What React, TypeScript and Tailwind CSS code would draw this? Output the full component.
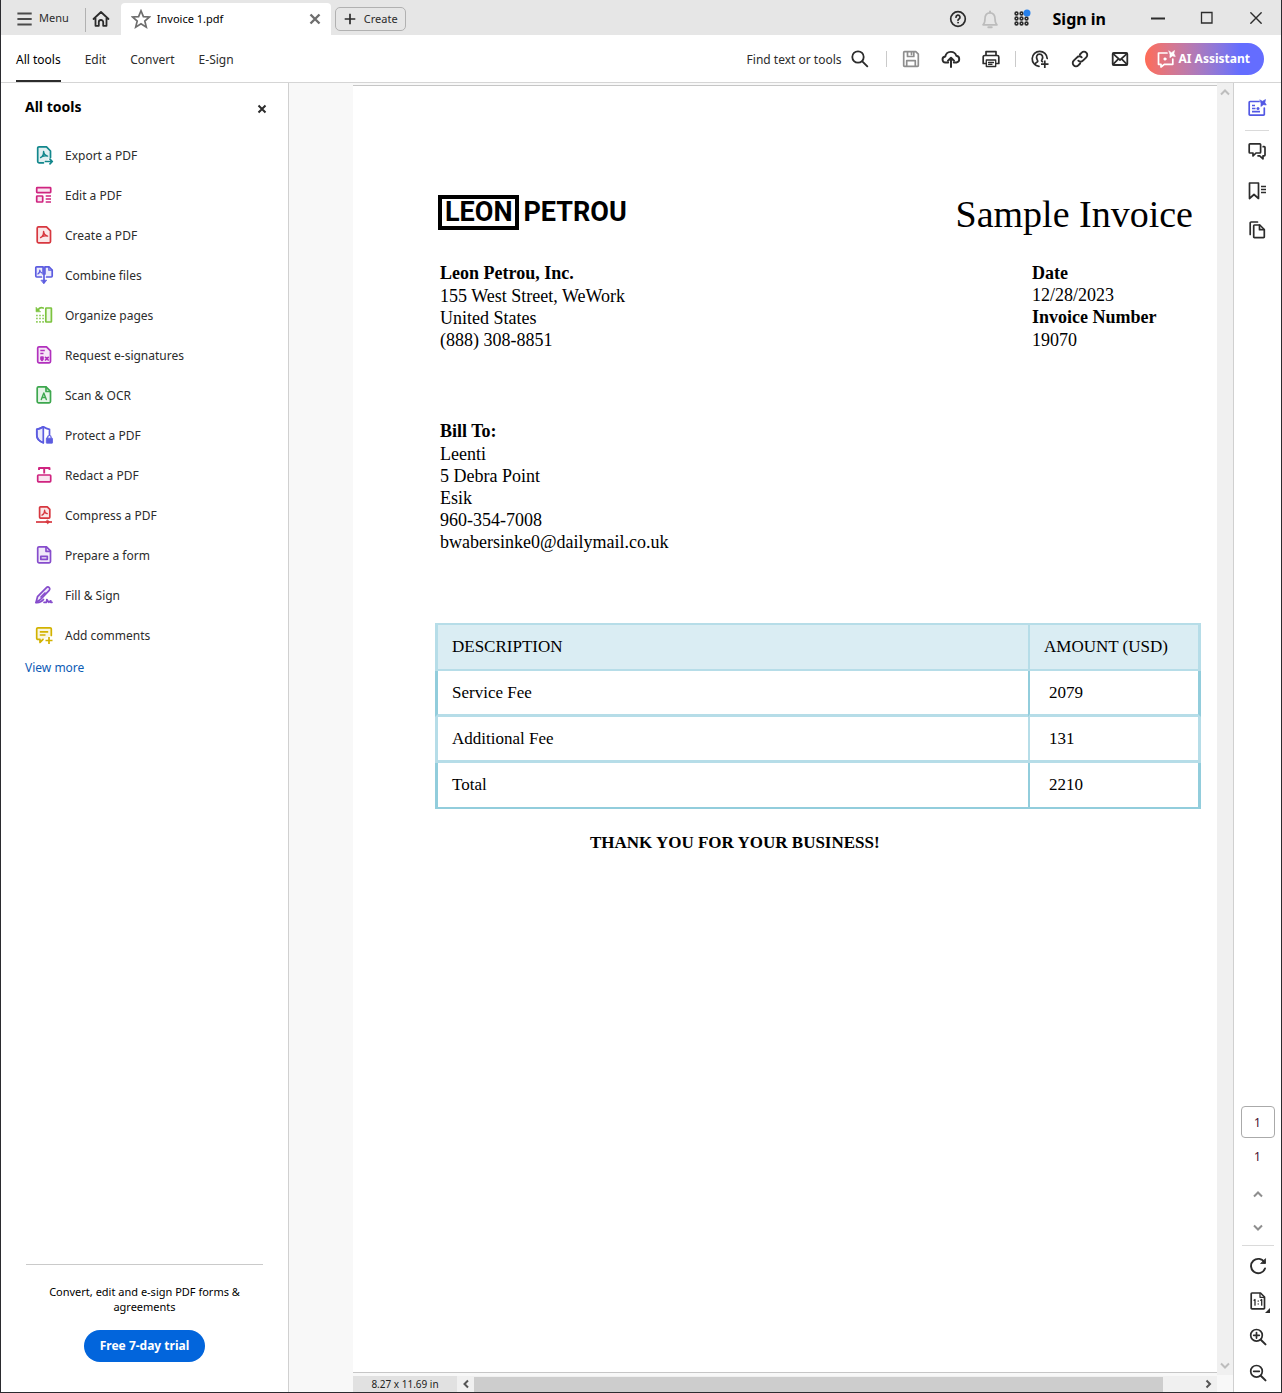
import type { ReactNode } from "react";

type IconProps = { children: ReactNode; className?: string };

function Icon({ children, className = "" }: IconProps) {
  return (
    <svg
      viewBox="0 0 20 20"
      className={`size-5 shrink-0 ${className}`}
      fill="none"
      stroke="currentColor"
      strokeWidth="1.7"
      strokeLinecap="round"
      strokeLinejoin="round"
      aria-hidden="true"
    >
      {children}
    </svg>
  );
}

const soft = { fill: "currentColor", fillOpacity: 0.12 };
const acrobat = "M6.6 12.6c1.6-.7 3-2.800 3-6.200M9.600 6.400c.2 2.500 1.500 4.200 4 4.700M6.600 12.600c1.500-1.600 4-2.100 7-1.500";

const tools: { label: string; color: string; icon: ReactNode }[] = [
  {
    label: "Export a PDF",
    color: "text-[#12878c]",
    icon: (
      <>
        <path d="M16.500 12.500V6L12.500 1.800H5A1.300 1.300 0 0 0 3.700 3.100v13.400A1.300 1.300 0 0 0 5 17.800h4.500" {...soft} />
        <path d={acrobat} strokeWidth="1.400" />
        <path d="M11.500 16.500h6.500M16 14.200l2.300 2.300-2.300 2.300" />
      </>
    ),
  },
  {
    label: "Edit a PDF",
    color: "text-[#cf2480]",
    icon: (
      <>
        <rect x="2.700" y="2.700" width="14" height="5" rx=".6" {...soft} />
        <rect x="2.700" y="11" width="6" height="6" rx=".6" {...soft} />
        <path d="M11.700 11h5.300M11.700 14h5.300M11.700 17h5.300" strokeLinecap="butt" />
      </>
    ),
  },
  {
    label: "Create a PDF",
    color: "text-[#d7373f]",
    icon: (
      <>
        <path d="M4.500 1.800h8l4 4v10.700a1.300 1.300 0 0 1-1.300 1.300H4.500a1.300 1.300 0 0 1-1.300-1.300V3A1.300 1.300 0 0 1 4.500 1.800z" {...soft} />
        <path d={acrobat} strokeWidth="1.400" />
      </>
    ),
  },
  {
    label: "Combine files",
    color: "text-[#5c5ce0]",
    icon: (
      <>
        <path d="M7.500 12H2.700a.9.9 0 0 1-.9-.9V2.800a.9.9 0 0 1 .9-.9h6.400v7M12.500 12h4.800a.9.9 0 0 0 .9-.9V5l-3.200-3.100h-4.100v7" {...soft} />
        <path d="M3.800 9c1.500-.6 2-2.400 2-4 0 1.300.600 2.400 2 2.800M14.800 2v3.200H18" strokeWidth="1.200" />
        <path d="M10 9v8.500" />
        <path d="M7.300 15.200h5.400L10 18.500z" fill="currentColor" strokeWidth=".8" />
      </>
    ),
  },
  {
    label: "Organize pages",
    color: "text-[#7cc33f]",
    icon: (
      <>
        <rect x="11.800" y="3" width="5.600" height="14" rx=".5" {...soft} />
        <path d="M2 2.500v4.300h4.300z" fill="currentColor" strokeWidth=".6" />
        <path d="M4 5c1-2 3-3 5.200-2" />
        <path d="M2 10.500h8M2 13.500h8M2 16.800h8" strokeDasharray="1.800 1.300" strokeLinecap="butt" strokeOpacity=".8" />
      </>
    ),
  },
  {
    label: "Request e-signatures",
    color: "text-[#b130bd]",
    icon: (
      <>
        <path d="M5 1.800h7.500l4 4v10.700a1.300 1.300 0 0 1-1.300 1.300H5a1.300 1.300 0 0 1-1.300-1.300V3A1.300 1.300 0 0 1 5 1.800z" {...soft} />
        <path d="M6.300 5.500h4.500M6.300 8.500h3.200" strokeLinecap="butt" />
        <path d="M7 12.200h2v2l-1 1.200-1-1.200z" fill="currentColor" />
        <path d="M11.500 12.300l2.700 2.700M14.200 12.300L11.500 15" />
      </>
    ),
  },
  {
    label: "Scan & OCR",
    color: "text-[#3da74e]",
    icon: (
      <>
        <path d="M4.500 1.800H12l4.500 4.500v10.200a1.300 1.300 0 0 1-1.300 1.300H4.500a1.300 1.300 0 0 1-1.300-1.300V3a1.300 1.300 0 0 1 1.300-1.200z" {...soft} />
        <path d="M12 2v4.500h4.300" />
        <path d="M7.300 14.500L9.800 8l2.500 6.500M8.200 12.500h3.200" strokeWidth="1.400" />
      </>
    ),
  },
  {
    label: "Protect a PDF",
    color: "text-[#5c5ce0]",
    icon: (
      <>
        <path d="M15.500 9.500V4.300C13 4 11 3 9.300 1.800 7.500 3 5.500 4 2.800 4.300v6c0 3.500 3.200 6.300 6.500 7.500" />
        <path d="M9.300 1.800C7.500 3 5.500 4 2.800 4.300v6c0 3.500 3.200 6.300 6.500 7.500z" {...soft} />
        <rect x="12.300" y="13.200" width="6.200" height="5" rx=".4" fill="currentColor" strokeWidth=".8" />
        <path d="M13.700 13v-.8a1.700 1.700 0 0 1 3.400 0v.8" strokeWidth="1.200" />
      </>
    ),
  },
  {
    label: "Redact a PDF",
    color: "text-[#cf2480]",
    icon: (
      <>
        <rect x="3.700" y="10" width="13" height="6.800" rx=".8" {...soft} />
        <path d="M5 5V3h10.500v2M10.200 3v5.500" strokeWidth="1.900" strokeLinecap="butt" />
      </>
    ),
  },
  {
    label: "Compress a PDF",
    color: "text-[#d7373f]",
    icon: (
      <>
        <path d="M6.500 1.800h6.800l2.500 2.500v8a.9.900 0 0 1-.9.900H6.500a.9.900 0 0 1-.9-.9V2.700a.9.900 0 0 1 .9-.9z" {...soft} />
        <path d="M8 10.200c1.600-.8 2.600-2.700 2.600-5 0 1.700 1 3.200 2.700 3.500" strokeWidth="1.300" />
        <path d="M2 17h16" strokeLinecap="butt" />
        <path d="M13.700 15.200l1.800 1.800-1.800 1.800-1.800-1.800z" fill="currentColor" strokeWidth=".8" />
      </>
    ),
  },
  {
    label: "Prepare a form",
    color: "text-[#864ccc]",
    icon: (
      <>
        <path d="M5 1.800h7.500l4 4v10.700a1.300 1.300 0 0 1-1.300 1.300H5a1.300 1.300 0 0 1-1.300-1.300V3A1.300 1.300 0 0 1 5 1.800z" {...soft} />
        <path d="M12 2v4.300h4.300" />
        <rect x="6.800" y="11.300" width="6.500" height="3" />
      </>
    ),
  },
  {
    label: "Fill & Sign",
    color: "text-[#864ccc]",
    icon: (
      <>
        <path d="M2 17.500l1.500-5.800 8.700-8.900c1-1 2.200-1 3-.2s.8 2-.2 3L6.500 14.500z" {...soft} />
        <path d="M2 17.500c3.500.3 5.500-.5 7.500-3M7 12l4-4" />
        <path d="M10 17.300h2.500l.3-2.800 2 2.800 2-1.500v1.500H18" />
      </>
    ),
  },
  {
    label: "Add comments",
    color: "text-[#d2b200]",
    icon: (
      <>
        <path d="M17.300 10.500V4A1.200 1.200 0 0 0 16.100 2.800H3.900A1.200 1.200 0 0 0 2.700 4v9.200a1.200 1.200 0 0 0 1.200 1.200H6v3l3-3" {...soft} />
        <path d="M5.800 6.800h8.400M5.800 10h5.700" strokeLinecap="butt" />
        <path d="M15 12v7M11.500 15.500h7" strokeLinecap="butt" />
      </>
    ),
  },
];

const CloseIcon = () => (
  <Icon>
    <path d="M6.500 6.500l7 7M13.500 6.500l-7 7" strokeWidth="2" strokeLinecap="butt" />
  </Icon>
);

function TitleBar() {
  return (
    <header className="flex h-[35px] items-center bg-[#e6e6e6] text-[11px] text-[#2c2c2c]">
      <button className="mt-0.5 flex items-center gap-1 pl-3">
        <Icon className="!size-[22px] text-[#4b4b4b]">
          <path d="M4 5h13M4 10h13M4 15h13" strokeLinecap="butt" />
        </Icon>
        <span>Menu</span>
      </button>
      <div className="ml-4 mt-1 h-6 w-px bg-[#b1b1b1]" />
      <button aria-label="Home" className="ml-[5px] mt-0.5">
        <Icon>
          <path d="M2.500 10L10 3l7.500 7M4.500 9v7.800h3.300v-3.600a2.200 2.200 0 0 1 4.400 0v3.600h3.300V9" strokeWidth="1.800" />
        </Icon>
      </button>
      <div className="ml-2.5 flex h-8 w-[210px] items-center self-end rounded-t bg-white pl-2.5 pr-1.5 text-black">
        <button aria-label="Add to starred">
          <Icon className="text-[#6e6e6e]">
            <path d="M10 1.800l2.400 5.800 6.100.4-4.700 4 1.500 6.100L10 14.800l-5.300 3.300L6.200 12 1.500 8l6.100-.4z" strokeLinejoin="miter" />
          </Icon>
        </button>
        <span className="ml-1.5">Invoice 1.pdf</span>
        <button aria-label="Close tab" className="ml-auto text-[#6e6e6e]">
          <svg viewBox="0 0 20 20" className="size-5" stroke="currentColor" strokeWidth="2.400" aria-hidden="true">
            <path d="M5.500 5.500l9 9M14.500 5.500l-9 9" />
          </svg>
        </button>
      </div>
      <button className="ml-1 mt-[3px] flex h-6 items-center gap-1 rounded-[5px] border border-[#b1b1b1] pl-1 pr-[7px]">
        <Icon>
          <path d="M10 4.700v10.600M4.700 10h10.600" strokeLinecap="butt" />
        </Icon>
        Create
      </button>
      <div className="ml-auto flex items-center pr-[15px]">
        <button aria-label="Help" className="mt-0.5">
          <Icon>
            <circle cx="10" cy="10" r="7.300" />
            <path d="M8 8.200a2 2 0 1 1 3 1.700c-.700.400-1 .700-1 1.400" />
            <circle cx="10" cy="13.700" r=".5" fill="currentColor" strokeWidth=".8" />
          </Icon>
        </button>
        <button aria-label="Notifications" className="ml-3 mt-1 text-[#bcbcbc]">
          <Icon>
            <path d="M3 14.800h14c-1.600-1.300-2-2.800-2-6C15 5 13 2.800 10 2.800S5 5 5 8.800c0 3.200-.4 4.700-2 6z" />
            <path d="M8.300 17.300h3.400M10 1.500v1" strokeWidth="2" />
          </Icon>
        </button>
        <button aria-label="Apps" className="ml-3 mt-0.5">
          <Icon>
            {[4.5, 9.500, 14.500].map((y) =>
              [4.5, 9.500, 14.500].map((x) => <circle key={`${x}-${y}`} cx={x} cy={y} r="1.400" strokeWidth="1.600" />),
            )}
            <circle cx="15" cy="4" r="3.500" fill="#2680eb" stroke="none" />
          </Icon>
        </button>
        <button className="ml-[21px] mt-0.5 text-base font-bold text-black">Sign in</button>
        <button aria-label="Minimize" className="ml-[42px]">
          <Icon>
            <path d="M3 10.500h14" strokeWidth="2" strokeLinecap="butt" />
          </Icon>
        </button>
        <button aria-label="Maximize" className="ml-[29px]">
          <Icon>
            <path d="M4.500 4.500h10.500v10.500H4.500z" strokeLinejoin="miter" strokeWidth="1.300" />
          </Icon>
        </button>
        <button aria-label="Close window" className="ml-[29px]">
          <Icon>
            <path d="M4.800 4.800l10.400 10.400M15.200 4.800L4.800 15.200" strokeWidth="1.400" />
          </Icon>
        </button>
      </div>
    </header>
  );
}

function Toolbar() {
  return (
    <div className="flex h-12 items-center justify-between border-b border-[#d5d5d5] pl-[15px] pr-[17px] text-xs text-[#2c2c2c]">
      <nav className="flex h-full gap-6">
        <a href="#all" className="flex items-center border-b-2 border-[#2c2c2c] pt-1 text-black">All tools</a>
        <a href="#edit" className="flex items-center border-b-2 border-transparent pt-1">Edit</a>
        <a href="#convert" className="flex items-center border-b-2 border-transparent pt-1">Convert</a>
        <a href="#esign" className="flex items-center border-b-2 border-transparent pt-1">E-Sign</a>
      </nav>
      <div className="flex items-center">
        <button className="flex items-center gap-2">
          <span className="pt-0.5">Find text or tools</span>
          <Icon>
            <circle cx="8" cy="8" r="5.700" strokeWidth="1.800" />
            <path d="M12.300 12.300l5 5" strokeWidth="1.900" />
          </Icon>
        </button>
        <div className="ml-4 h-4 w-px bg-[#cacaca]" />
        <button aria-label="Save" className="ml-3.5 text-[#8e8e8e]">
          <Icon>
            <path d="M2.700 3.500a.8.800 0 0 1 .8-.8h11.300l2.500 2.500v11.300a.8.800 0 0 1-.8.800h-13a.8.800 0 0 1-.8-.8zM5.700 17v-5.300h8.600V17M6.500 3v4.500h6.300V3M10.500 3.500v2" />
          </Icon>
        </button>
        <button aria-label="Upload to cloud" className="ml-5">
          <Icon>
            <path d="M7.200 13.500H4.800a3 3 0 0 1-.5-6 5.700 5.700 0 0 1 11-.7 3.400 3.400 0 0 1 .2 6.700h-2.700" strokeWidth="1.900" />
            <path d="M10 18V9M7 11.700l3-3 3 3" strokeWidth="2" />
          </Icon>
        </button>
        <button aria-label="Print" className="ml-5">
          <Icon>
            <path d="M5 6V2.700h10V6M5 14.500H2.200V8A1.500 1.500 0 0 1 3.700 6.500h12.600A1.500 1.500 0 0 1 17.800 8v6.500H15" />
            <path d="M5.300 11h9.400v6.500H5.300zM7.500 13.500h5M7.500 15.300h3.500" strokeWidth="1.300" />
          </Icon>
        </button>
        <div className="ml-[14px] h-4 w-px bg-[#cacaca]" />
        <button aria-label="Share with others" className="ml-3.5">
          <Icon>
            <path d="M9 17.300A7.500 7.500 0 1 1 17.200 9.500" />
            <path d="M5 15.500c.3-2 1.500-2 2.500-2.700.8-.7.200-1.300-.4-2.300C6 8.300 6.500 5.200 9.500 5.200s3.800 2.800 2.600 5.200c-.6 1.100-.9 1.900.4 2.300" />
            <path d="M14.800 11.500v7.500M11 15.200h7.500" strokeLinecap="butt" />
          </Icon>
        </button>
        <button aria-label="Copy link" className="ml-5">
          <Icon>
            <path d="M8.300 11.700a3.200 3.200 0 0 0 4.600 0l3.400-3.400a3.250 3.250 0 0 0-4.600-4.600L9.900 5.500M11.700 8.300a3.200 3.200 0 0 0-4.600 0l-3.400 3.400a3.250 3.250 0 0 0 4.600 4.600l1.800-1.800" strokeWidth="1.900" />
          </Icon>
        </button>
        <button aria-label="Send by email" className="ml-5">
          <Icon>
            <rect x="2.700" y="4" width="14.600" height="12" rx="1" strokeWidth="1.800" />
            <path d="M3 4.700l7 6.300 7-6.300M3 15.300l5-5M17 15.300l-5-5" />
          </Icon>
        </button>
        <button className="ml-[15px] flex h-8 items-center gap-[3px] rounded-full bg-linear-to-r from-[#ff6b55] to-[#646dff] to-80% pl-[11px] pr-3.5 font-bold text-white">
          <Icon>
            <path d="M11 4H2.500v11.300H5V18l3.300-2.700h8.500V10" strokeWidth="1.700" />
            <path d="M13 2l2.500 1.700L18.500 1.500l-.6 3 1.400 3-2.900-.6-2.500 1.800.1-3z" fill="currentColor" strokeWidth=".6" />
            <circle cx="9" cy="10" r="1.300" fill="currentColor" strokeWidth=".5" />
          </Icon>
          AI Assistant
        </button>
      </div>
    </div>
  );
}

function ToolsPanel() {
  return (
    <aside className="flex w-72 shrink-0 flex-col border-r border-[#d0d0d0] text-[#2c2c2c]">
      <div className="flex h-[52px] items-center justify-between pl-6 pr-4">
        <h2 className="mb-1 text-sm font-bold text-black">All tools</h2>
        <button aria-label="Close panel"><CloseIcon /></button>
      </div>
      <ul>
        {tools.map((tool) => (
          <li key={tool.label}>
            <button className="flex h-10 w-full items-center gap-[11px] pl-[33px] text-xs">
              <Icon className={tool.color}>{tool.icon}</Icon>
              <span className="pt-0.5">{tool.label}</span>
            </button>
          </li>
        ))}
      </ul>
      <a href="#more" className="self-start pl-6 pt-[5px] text-xs text-[#0d5cb5]">View more</a>
      <div className="mx-[25px] mt-auto flex flex-col items-center border-t border-[#cacaca] pb-[30px] pt-[19px] text-center text-[11px] leading-[15px] text-black">
        <p>Convert, edit and e-sign PDF forms &amp; agreements</p>
        <button className="mt-4 h-8 rounded-full bg-[#0265dc] px-4 text-xs font-bold text-white">Free 7-day trial</button>
      </div>
    </aside>
  );
}

const rows = [
  { name: "Service Fee", amount: "2079", side: "border-x-[#92cddc]", base: "border-b-[3px] border-b-[#b6dde8]" },
  { name: "Additional Fee", amount: "131", side: "border-x-[#b6dde8]", base: "border-b-[3px] border-b-[#b6dde8]" },
  { name: "Total", amount: "2210", side: "border-x-[#92cddc]", base: "border-b-2 border-b-[#92cddc]" },
];

function InvoicePage() {
  return (
    <article className="mt-0.5 flex-1 border-y border-[#c6c6c6] bg-white pl-[82px] pr-4 pt-[106px] font-['Liberation_Serif',serif] text-lg leading-[22px] text-black">
      <div className="flex items-start justify-between pl-[5px] pr-2">
        <div className="-ml-0.5 mt-[3px] flex items-center gap-1 font-[Roboto,sans-serif] text-[27px] font-bold leading-[27px]">
          <span className="border-4 border-black px-[3px]">LEON</span>
          <span>PETROU</span>
        </div>
        <h1 className="text-[38px] leading-[44px]">Sample Invoice</h1>
      </div>
      <div className="mt-[26px] flex justify-between pl-[5px] pr-10">
        <address className="not-italic">
          <strong className="block pb-px">Leon Petrou, Inc.</strong>
          <p>155 West Street, WeWork</p>
          <p>United States</p>
          <p>(888) 308-8851</p>
        </address>
        <dl className="w-[129px]">
          <dt className="font-bold">Date</dt>
          <dd>12/28/2023</dd>
          <dt className="pb-px font-bold">Invoice Number</dt>
          <dd>19070</dd>
        </dl>
      </div>
      <address className="mt-[69px] pl-[5px] not-italic">
        <strong className="block pb-px">Bill To:</strong>
        <p>Leenti</p>
        <p>5 Debra Point</p>
        <p>Esik</p>
        <p>960-354-7008</p>
        <p>bwabersinke0@dailymail.co.uk</p>
      </address>
      <table className="mt-[70px] w-full border-separate border-spacing-0 text-left text-[17px]">
        <thead>
          <tr className="h-12 bg-[#daedf3]">
            <th className="border-y-2 border-l-[3px] border-[#b6dde8] pl-3.5 font-normal">DESCRIPTION</th>
            <th className="w-[173px] border-y-2 border-l-2 border-r-[3px] border-[#b6dde8] pl-3.5 font-normal">AMOUNT (USD)</th>
          </tr>
        </thead>
        <tbody>
          {rows.map((row) => (
            <tr key={row.name} className="h-[46px]">
              <td className={`border-l-[3px] pl-3.5 ${row.side} ${row.base}`}>{row.name}</td>
              <td className={`border-l-2 border-r-[3px] pl-[19px] ${row.side} ${row.base}`}>{row.amount}</td>
            </tr>
          ))}
        </tbody>
      </table>
      <p className="mt-[23px] pl-[155px] text-[17px] font-bold">THANK YOU FOR YOUR BUSINESS!</p>
    </article>
  );
}

function Chevron({ d }: { d: string }) {
  return (
    <svg viewBox="0 0 12 12" className="size-3" fill="none" stroke="currentColor" strokeWidth="2" aria-hidden="true">
      <path d={d} />
    </svg>
  );
}

const up = "M2 8.500l4-4 4 4";
const down = "M2 3.500l4 4 4-4";
const left = "M8 2.500L4.500 6 8 9.500";
const right = "M4.500 2.500L8 6l-3.500 3.500";

function Viewer() {
  return (
    <main className="flex min-w-0 flex-1 bg-[#f8f8f8] pl-16">
      <div className="flex min-w-0 flex-1 flex-col">
        <InvoicePage />
        <div className="mt-[3px] flex h-4 items-center bg-[#f0f0f0] text-[10px] text-[#222]">
          <span className="flex h-full w-26 items-center justify-center bg-[#e1e1e1]">8.27 x 11.69 in</span>
          <button aria-label="Scroll left" className="flex w-[17px] justify-center text-[#555]"><Chevron d={left} /></button>
          <div className="h-[15px] flex-1 bg-[#cdcdcd]" />
          <button aria-label="Scroll right" className="flex w-[54px] justify-end pr-[3px] text-[#555]"><Chevron d={right} /></button>
        </div>
      </div>
      <div className="mb-[17px] flex w-4 shrink-0 flex-col items-center justify-between bg-[#f0f0f0] py-[3px] text-[#bdbdbd]">
        <button aria-label="Scroll up"><Chevron d={up} /></button>
        <button aria-label="Scroll down"><Chevron d={down} /></button>
      </div>
    </main>
  );
}

function Rail() {
  return (
    <aside className="flex w-12 shrink-0 flex-col items-center border-l border-[#d0d0d0] text-[#2c2c2c]">
      <div className="flex flex-col items-center pr-0.5">
        <button aria-label="Generative summary" className="mt-[15px] text-[#5258e4]">
          <Icon>
            <path d="M12 3.500H3A.8.800 0 0 0 2.200 4.300v12a.8.800 0 0 0 .8.800h13.500a.8.800 0 0 0 .8-.8V10" />
            <path d="M5 7.500h3M5 10.500h3.500M5 13.700h8" strokeLinecap="butt" />
            <circle cx="11" cy="10.400" r="1.500" fill="currentColor" stroke="none" />
            <path d="M13 2l2.500 1.200L18.500 1.500l-.6 3 1.400 2.500-2.900-.3-2.500 1.800.1-3z" fill="currentColor" strokeWidth=".6" />
          </Icon>
        </button>
        <div className="mt-3 h-px w-6 bg-[#dadada]" />
        <button aria-label="Comments" className="mt-2.5">
          <Icon>
            <path d="M3 2.800h9.800a.8.800 0 0 1 .8.800v7.600a.8.800 0 0 1-.8.800H9L6 15v-3H3a.8.800 0 0 1-.8-.8V3.600a.8.800 0 0 1 .8-.8z" />
            <path d="M16.200 5.700h1a.8.800 0 0 1 .8.800v7.500a.8.800 0 0 1-.8.800H16v3l-3.300-3H11" />
          </Icon>
        </button>
        <button aria-label="Bookmarks" className="mt-5">
          <Icon>
            <path d="M2.500 2h9v15.500L7 13.500l-4.500 4z" />
            <path d="M14 5.500h5M14 8.500h5M14 11.500h5" strokeLinecap="butt" />
          </Icon>
        </button>
        <button aria-label="Page thumbnails" className="mt-[19px]">
          <Icon>
            <path d="M7.500 5h5.300l4.500 4.500v7.300a.8.800 0 0 1-.8.800H7.500a.8.800 0 0 1-.8-.8v-11a.8.800 0 0 1 .8-.8z" />
            <path d="M12.500 5.200v4.500H17M3.200 14.500V3a1 1 0 0 1 1-1h6.300" />
          </Icon>
        </button>
      </div>
      <div className="mt-auto flex flex-col items-center pb-2">
        <input aria-label="Current page" defaultValue="1" className="h-8 w-[34px] rounded border border-[#aaa] text-center text-xs text-[#4a1030]" />
        <span className="mt-2.5 text-xs leading-[18px] text-[#4a1030]">1</span>
        <button aria-label="Previous page" className="mt-[22px] text-[#8e8e8e]"><Chevron d={up} /></button>
        <button aria-label="Next page" className="mt-[22px] text-[#8e8e8e]"><Chevron d={down} /></button>
        <div className="mt-[11px] h-px w-8 bg-[#dadada]" />
        <button aria-label="Rotate" className="mt-2.5">
          <Icon>
            <path d="M16.500 6.500A7.200 7.200 0 1 0 17 12.500" strokeWidth="1.900" />
            <path d="M17.500 3v4.500H13z" fill="currentColor" strokeWidth=".8" />
          </Icon>
        </button>
        <button aria-label="Actual size" className="relative mt-[15px]">
          <Icon>
            <path d="M4 2h8.500l4 4v11a.8.800 0 0 1-.8.800H4a.8.800 0 0 1-.8-.8V2.800A.8.800 0 0 1 4 2z" />
            <path d="M12 2.300v4h4M6 9.200l1-.7v5.700M12.700 9.200l1-.7v5.700M10.200 10v.2M10.200 12.800v.2" strokeWidth="1.300" />
          </Icon>
          <svg viewBox="0 0 5 5" className="absolute -bottom-0.5 -right-0.5 size-[5px]" aria-hidden="true">
            <path d="M5 0v5H0z" fill="currentColor" />
          </svg>
        </button>
        <button aria-label="Zoom in" className="mt-4">
          <Icon>
            <circle cx="8.500" cy="8.300" r="5.800" />
            <path d="M12.800 12.700l4.700 4.700" strokeWidth="2" />
            <path d="M8.500 5.500v5.600M5.700 8.300h5.600" />
          </Icon>
        </button>
        <button aria-label="Zoom out" className="mb-px mt-4">
          <Icon>
            <circle cx="8.500" cy="8.300" r="5.800" />
            <path d="M12.800 12.700l4.700 4.700" strokeWidth="2" />
            <path d="M5.700 8.300h5.600" />
          </Icon>
        </button>
      </div>
    </aside>
  );
}

export default function App() {
  return (
    <div className="flex min-h-screen flex-col border-x border-b border-[#2b2b2f] bg-white font-['Noto_Sans',sans-serif]">
      <TitleBar />
      <Toolbar />
      <div className="flex flex-1">
        <ToolsPanel />
        <Viewer />
        <Rail />
      </div>
    </div>
  );
}
